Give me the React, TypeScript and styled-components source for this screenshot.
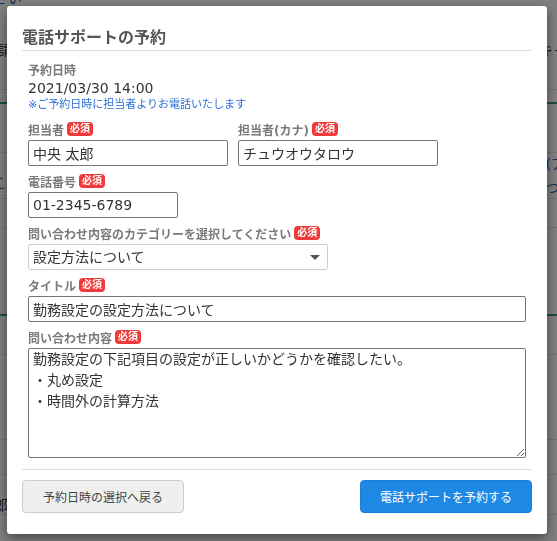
import styled, { createGlobalStyle } from 'styled-components'

const GlobalStyle = createGlobalStyle`
  html, body {
    margin: 0;
    padding: 0;
  }
  body {
    font-family: 'DejaVu Sans', 'Noto Sans CJK JP', sans-serif;
    color: #333;
  }
`

// ---- page behind the dialog ----

const Page = styled.div`
  position: relative;
  width: 100%;
  height: 541px;
  overflow: hidden;
  background: #fff;
`

const BgRow = styled.div<{ $h: number; $line?: string }>`
  height: ${({ $h }) => $h}px;
  box-sizing: border-box;
  display: flex;
  justify-content: space-between;
  align-items: center;
  border-bottom: ${({ $line }) => ($line ? `${$line === 'green' ? 2 : 1}px solid ${$line === 'green' ? '#3f9b78' : '#e2e2e2'}` : 'none')};
  font-size: 14px;
  line-height: 20px;
`

const BgText = styled.span<{ $blue?: boolean; $side: 'l' | 'r'; $shift?: number }>`
  white-space: nowrap;
  color: ${({ $blue }) => ($blue ? '#2a5caa' : '#333')};
  ${({ $side, $shift = 0 }) =>
    $side === 'l' ? `margin-left: ${$shift}px;` : `margin-right: ${$shift}px;`}
`

const BgStack = styled.div`
  display: flex;
  flex-direction: column;
  gap: 4px;
`

// ---- dialog ----

const Overlay = styled.div`
  position: fixed;
  inset: 0;
  background: rgba(0, 0, 0, 0.5);
`

const Modal = styled.div`
  width: 540px;
  height: 528px;
  margin: 6px 0 0 7px;
  box-sizing: border-box;
  padding: 0 15px;
  background: #fff;
  border-radius: 3px;
  box-shadow: 0 4px 12px rgba(0, 0, 0, 0.45);
  display: flex;
  flex-direction: column;
`

const Header = styled.div`
  padding-top: 20px;
  border-bottom: 1px solid #dedede;
`

const Title = styled.h2`
  margin: 0;
  font-size: 16px;
  line-height: 24px;
  font-weight: 700;
  color: #555;
`

const Body = styled.div`
  padding: 9px 6px 0;
  display: flex;
  flex-direction: column;
`

const Label = styled.div`
  display: flex;
  align-items: center;
  gap: 3px;
  height: 18px;
  font-size: 12px;
  font-weight: 700;
  color: #7a7a7a;
  white-space: nowrap;
`

const Required = styled.span`
  display: inline-flex;
  align-items: center;
  justify-content: center;
  height: 14px;
  padding: 0 3px;
  border-radius: 4px;
  background: #f03a3a;
  color: #fff;
  font-size: 10px;
  font-weight: 700;
  line-height: 14px;
`

const DateText = styled.div`
  margin-top: 1px;
  font-size: 14px;
  line-height: 18px;
  color: #333;
`

const Note = styled.div`
  margin-top: 1px;
  font-size: 11px;
  line-height: 14px;
  color: #2a6fd6;
`

const FieldRow = styled.div`
  display: flex;
  gap: 10px;
  margin-top: 8px;
`

const Field = styled.div<{ $first?: boolean }>`
  display: flex;
  flex-direction: column;
  gap: 2px;
  margin-top: ${({ $first }) => ($first ? 0 : 6)}px;
`

const TextInput = styled.input<{ $w?: number }>`
  width: ${({ $w }) => ($w ? `${$w}px` : '100%')};
  height: 26px;
  box-sizing: border-box;
  padding: 0 4px;
  border: 1px solid #767676;
  border-radius: 2px;
  font-family: inherit;
  font-size: 14px;
  color: #333;
  background: #fff;
  outline: none;
`

const SelectWrap = styled.div`
  position: relative;
  width: 300px;
  &::after {
    content: '';
    position: absolute;
    right: 8px;
    top: 11px;
    border-left: 5px solid transparent;
    border-right: 5px solid transparent;
    border-top: 5px solid #555;
    pointer-events: none;
  }
`

const Select = styled.select`
  appearance: none;
  width: 100%;
  height: 26px;
  box-sizing: border-box;
  padding: 0 4px;
  border: 1px solid #cfcfcf;
  border-radius: 2px;
  background: #fff;
  font-family: inherit;
  font-size: 14px;
  color: #333;
  outline: none;
`

const TextArea = styled.textarea`
  width: 100%;
  height: 110px;
  box-sizing: border-box;
  padding: 0 4px;
  border: 1px solid #767676;
  border-radius: 2px;
  font-family: inherit;
  font-size: 14px;
  line-height: 21px;
  color: #333;
  outline: none;
`

const Footer = styled.div`
  margin-top: 11px;
  padding-top: 10px;
  border-top: 1px solid #dedede;
  display: flex;
  justify-content: space-between;
`

const Button = styled.button<{ $primary?: boolean; $w: number }>`
  width: ${({ $w }) => $w}px;
  height: 33px;
  border-radius: 4px;
  border: 1px solid ${({ $primary }) => ($primary ? '#1b7fdc' : '#cccccc')};
  background: ${({ $primary }) => ($primary ? '#1e88e5' : '#efefef')};
  color: ${({ $primary }) => ($primary ? '#fff' : '#444')};
  font-family: inherit;
  font-size: 12px;
  cursor: pointer;
`

export default function App() {
  return (
    <>
      <GlobalStyle />
      <Page>
        <BgRow $h={10}>
          <BgText $blue $side="l" $shift={-34} style={{ marginTop: -14 }}>
            ください
          </BgText>
        </BgRow>
        <BgRow $h={80} $line="light">
          <BgText $side="l" $shift={-16}>申請</BgText>
          <BgText $side="r" $shift={-10}>キャ</BgText>
        </BgRow>
        <BgRow $h={14} $line="green" />
        <BgRow $h={49} $line="light" />
        <BgRow $h={46} $line="light">
          <BgText $blue $side="l" $shift={-8} style={{ marginTop: 14 }}>
            こ
          </BgText>
          <BgStack>
            <BgText $blue $side="r" $shift={-8}>(ア</BgText>
            <BgText $blue $side="r" $shift={-8}>つ</BgText>
          </BgStack>
        </BgRow>
        <BgRow $h={29} $line="light" />
        <BgRow $h={88} $line="green" />
        <BgRow $h={39} $line="light" />
        <BgRow $h={85} $line="light" />
        <BgRow $h={35} $line="light" />
        <BgRow $h={40} $line="light">
          <BgText $side="l" $shift={-6} style={{ marginTop: 20 }}>郎</BgText>
        </BgRow>

        <Overlay>
          <Modal>
            <Header>
              <Title>電話サポートの予約</Title>
            </Header>
            <Body>
              <Label>予約日時</Label>
              <DateText>2021/03/30 14:00</DateText>
              <Note>※ご予約日時に担当者よりお電話いたします</Note>

              <FieldRow>
                <Field $first>
                  <Label>
                    担当者<Required>必須</Required>
                  </Label>
                  <TextInput $w={200} defaultValue="中央 太郎" />
                </Field>
                <Field $first>
                  <Label>
                    担当者(カナ)<Required>必須</Required>
                  </Label>
                  <TextInput $w={200} defaultValue="チュウオウタロウ" />
                </Field>
              </FieldRow>

              <Field>
                <Label>
                  電話番号<Required>必須</Required>
                </Label>
                <TextInput $w={150} defaultValue="01-2345-6789" />
              </Field>

              <Field>
                <Label>
                  問い合わせ内容のカテゴリーを選択してください<Required>必須</Required>
                </Label>
                <SelectWrap>
                  <Select defaultValue="setting">
                    <option value="setting">設定方法について</option>
                    <option value="other">その他</option>
                  </Select>
                </SelectWrap>
              </Field>

              <Field>
                <Label>
                  タイトル<Required>必須</Required>
                </Label>
                <TextInput defaultValue="勤務設定の設定方法について" />
              </Field>

              <Field>
                <Label>
                  問い合わせ内容<Required>必須</Required>
                </Label>
                <TextArea
                  defaultValue={
                    '勤務設定の下記項目の設定が正しいかどうかを確認したい。\n・丸め設定\n・時間外の計算方法'
                  }
                />
              </Field>
            </Body>
            <Footer>
              <Button $w={162}>予約日時の選択へ戻る</Button>
              <Button $primary $w={172}>
                電話サポートを予約する
              </Button>
            </Footer>
          </Modal>
        </Overlay>
      </Page>
    </>
  )
}
